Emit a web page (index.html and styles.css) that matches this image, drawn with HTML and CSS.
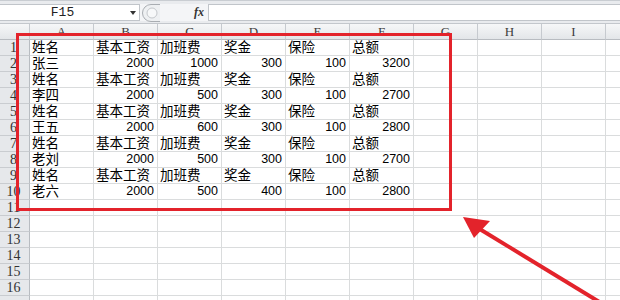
FILE: index.html
```html
<!DOCTYPE html>
<html>
<head>
<meta charset="utf-8">
<link rel="stylesheet" href="styles.css">
</head>
<body>
<div class="sheet">
  <div class="fbar">
    <div class="namebox"><span class="nb-text">F15</span><span class="nb-arrow"></span></div>
    <div class="grip">
      <svg width="20" height="18" viewBox="0 0 20 18"><path d="M18 0.5 H9 A8.5 8.5 0 0 0 9 17.5 H18" fill="#eef0f2" stroke="#a9adb2"/><circle cx="10" cy="9" r="5" fill="#f7f8f9" stroke="#c4c7cb"/></svg>
    </div>
    <div class="fx">fx</div>
    <div class="finput"></div>
  </div>

  <div class="grid">
    <div class="row head"><div class="corner"></div><div class="ch">A</div><div class="ch">B</div><div class="ch">C</div><div class="ch">D</div><div class="ch">E</div><div class="ch">F</div><div class="ch">G</div><div class="ch">H</div><div class="ch">I</div><div class="ch"></div></div>

    <div class="row"><div class="rh">1</div><div class="c">姓名</div><div class="c">基本工资</div><div class="c">加班费</div><div class="c">奖金</div><div class="c">保险</div><div class="c">总额</div><div class="c"></div><div class="c"></div><div class="c"></div><div class="c"></div></div>
    <div class="row"><div class="rh">2</div><div class="c">张三</div><div class="c n">2000</div><div class="c n">1000</div><div class="c n">300</div><div class="c n">100</div><div class="c n">3200</div><div class="c"></div><div class="c"></div><div class="c"></div><div class="c"></div></div>
    <div class="row"><div class="rh">3</div><div class="c">姓名</div><div class="c">基本工资</div><div class="c">加班费</div><div class="c">奖金</div><div class="c">保险</div><div class="c">总额</div><div class="c"></div><div class="c"></div><div class="c"></div><div class="c"></div></div>
    <div class="row"><div class="rh">4</div><div class="c">李四</div><div class="c n">2000</div><div class="c n">500</div><div class="c n">300</div><div class="c n">100</div><div class="c n">2700</div><div class="c"></div><div class="c"></div><div class="c"></div><div class="c"></div></div>
    <div class="row"><div class="rh">5</div><div class="c">姓名</div><div class="c">基本工资</div><div class="c">加班费</div><div class="c">奖金</div><div class="c">保险</div><div class="c">总额</div><div class="c"></div><div class="c"></div><div class="c"></div><div class="c"></div></div>
    <div class="row"><div class="rh">6</div><div class="c">王五</div><div class="c n">2000</div><div class="c n">600</div><div class="c n">300</div><div class="c n">100</div><div class="c n">2800</div><div class="c"></div><div class="c"></div><div class="c"></div><div class="c"></div></div>
    <div class="row"><div class="rh">7</div><div class="c">姓名</div><div class="c">基本工资</div><div class="c">加班费</div><div class="c">奖金</div><div class="c">保险</div><div class="c">总额</div><div class="c"></div><div class="c"></div><div class="c"></div><div class="c"></div></div>
    <div class="row"><div class="rh">8</div><div class="c">老刘</div><div class="c n">2000</div><div class="c n">500</div><div class="c n">300</div><div class="c n">100</div><div class="c n">2700</div><div class="c"></div><div class="c"></div><div class="c"></div><div class="c"></div></div>
    <div class="row"><div class="rh">9</div><div class="c">姓名</div><div class="c">基本工资</div><div class="c">加班费</div><div class="c">奖金</div><div class="c">保险</div><div class="c">总额</div><div class="c"></div><div class="c"></div><div class="c"></div><div class="c"></div></div>
    <div class="row"><div class="rh">10</div><div class="c">老六</div><div class="c n">2000</div><div class="c n">500</div><div class="c n">400</div><div class="c n">100</div><div class="c n">2800</div><div class="c"></div><div class="c"></div><div class="c"></div><div class="c"></div></div>
    <div class="row"><div class="rh">11</div><div class="c"></div><div class="c"></div><div class="c"></div><div class="c"></div><div class="c"></div><div class="c"></div><div class="c"></div><div class="c"></div><div class="c"></div><div class="c"></div></div>
    <div class="row"><div class="rh">12</div><div class="c"></div><div class="c"></div><div class="c"></div><div class="c"></div><div class="c"></div><div class="c"></div><div class="c"></div><div class="c"></div><div class="c"></div><div class="c"></div></div>
    <div class="row"><div class="rh">13</div><div class="c"></div><div class="c"></div><div class="c"></div><div class="c"></div><div class="c"></div><div class="c"></div><div class="c"></div><div class="c"></div><div class="c"></div><div class="c"></div></div>
    <div class="row"><div class="rh">14</div><div class="c"></div><div class="c"></div><div class="c"></div><div class="c"></div><div class="c"></div><div class="c"></div><div class="c"></div><div class="c"></div><div class="c"></div><div class="c"></div></div>
    <div class="row"><div class="rh">15</div><div class="c"></div><div class="c"></div><div class="c"></div><div class="c"></div><div class="c"></div><div class="c"></div><div class="c"></div><div class="c"></div><div class="c"></div><div class="c"></div></div>
    <div class="row"><div class="rh">16</div><div class="c"></div><div class="c"></div><div class="c"></div><div class="c"></div><div class="c"></div><div class="c"></div><div class="c"></div><div class="c"></div><div class="c"></div><div class="c"></div></div>
    <div class="row"><div class="rh"></div><div class="c"></div><div class="c"></div><div class="c"></div><div class="c"></div><div class="c"></div><div class="c"></div><div class="c"></div><div class="c"></div><div class="c"></div><div class="c"></div></div>
  </div>

  <div class="highlight"></div>
  <svg class="arrow" width="620" height="300" viewBox="0 0 620 300">
    <line x1="478" y1="228" x2="606" y2="306" stroke="#e3232b" stroke-width="4"/>
    <polygon points="463,217 474,238 490,221" fill="#e3232b"/>
  </svg>
</div>
</body>
</html>
```

FILE: styles.css
```css
html, body {
  margin: 0;
  padding: 0;
  background: #ffffff;
}

.sheet {
  position: relative;
  width: 620px;
  height: 300px;
  overflow: hidden;
  font-family: "Liberation Sans", "Noto Sans CJK SC", sans-serif;
}

/* formula bar */
.fbar {
  display: flex;
  align-items: stretch;
  height: 24px;
  box-sizing: border-box;
  padding-top: 3px;
  padding-bottom: 2px;
  background: #e9ebee;
  border-top: 1px solid #c9cdd2;
  border-bottom: 1px solid #c3c7cc;
}

.namebox {
  width: 140px;
  display: flex;
  align-items: center;
  background: #ffffff;
  border: 1px solid #c1c5ca;
  border-left: none;
  box-sizing: border-box;
}

.nb-text {
  width: 125px;
  text-align: center;
  font-family: "Liberation Mono", monospace;
  font-size: 13px;
  color: #222;
}

.nb-arrow {
  width: 0;
  height: 0;
  border-left: 3px solid transparent;
  border-right: 3px solid transparent;
  border-top: 4px solid #333;
  margin-left: 5px;
}

.grip {
  width: 48px;
  display: flex;
  align-items: center;
  padding-left: 2px;
  background: #f4f5f7;
}

.grip svg {
  display: block;
}

.fx {
  width: 18px;
  display: flex;
  align-items: center;
  background: #f4f5f7;
  font-family: "Liberation Serif", serif;
  font-style: italic;
  font-weight: bold;
  font-size: 12px;
  color: #333;
  padding-left: 4px;
  box-sizing: border-box;
}

.finput {
  flex: 1;
  background: #ffffff;
  border: 1px solid #c1c5ca;
  border-right: none;
}

/* grid */
.grid {
  display: flex;
  flex-direction: column;
}

.row {
  display: grid;
  grid-template-columns: 30px repeat(10, 64px);
  height: 16px;
}

.row > div {
  box-sizing: border-box;
  height: 16px;
  border-right: 1px solid #dadcdd;
  border-bottom: 1px solid #dadcdd;
  overflow: hidden;
  white-space: nowrap;
}

.row.head > div {
  background: linear-gradient(#f6f7f8, #e3e6e9);
  border-right: 1px solid #c6cacf;
  border-bottom: 1px solid #b8bcc1;
}

.ch {
  text-align: center;
  font-family: "Liberation Serif", serif;
  font-size: 13px;
  line-height: 15px;
  color: #3b3b3b;
}

.row > .rh {
  background: #e6e8eb;
  border-right: 1px solid #b8bcc1;
  border-bottom: 1px solid #c9ccd0;
  text-align: center;
  font-family: "Liberation Serif", serif;
  font-size: 14px;
  line-height: 15px;
  color: #333;
  padding-right: 2px;
}

.c {
  font-size: 13.5px;
  line-height: 15px;
  padding-left: 2px;
  color: #000;
}

.c.n {
  text-align: right;
  padding-left: 0;
  padding-right: 3px;
  font-size: 12.5px;
}

/* annotations */
.highlight {
  position: absolute;
  left: 16px;
  top: 33px;
  width: 436px;
  height: 178px;
  box-sizing: border-box;
  border: 3px solid #e3232b;
}

.arrow {
  position: absolute;
  left: 0;
  top: 0;
}
```
